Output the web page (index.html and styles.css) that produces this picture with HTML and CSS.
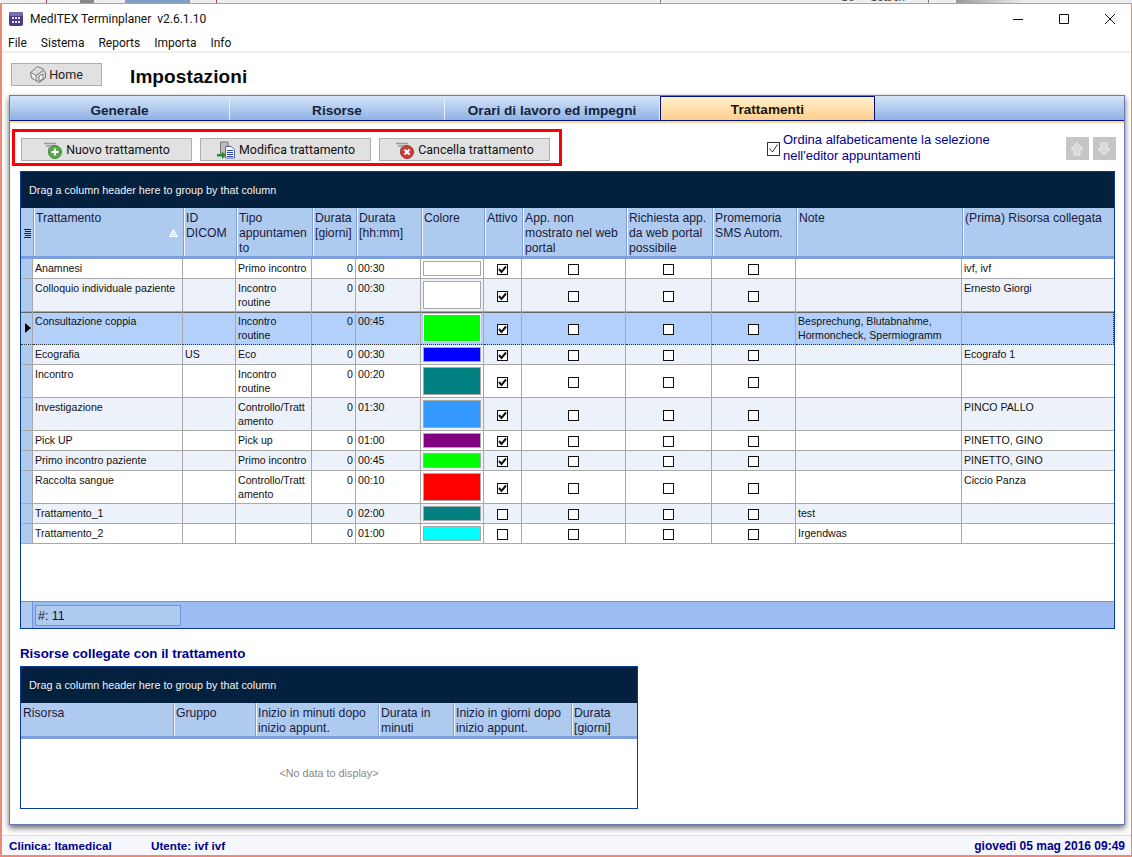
FILE: index.html
```html
<!DOCTYPE html>
<html lang="it">
<head>
  <meta charset="UTF-8">
  <title>MedITEX Terminplaner</title>
  <link rel="stylesheet" href="styles.css">
</head>
<body>

  <div class="behind">
    <span class="behind-line l1"></span>
    <span class="behind-dark d1"></span>
    <span class="behind-dark d2"></span>
    <span class="behind-line l2"></span>
    <span class="behind-tag t1">Go</span>
    <span class="behind-tag t2">Search</span>
    <span class="behind-fade"></span>
  </div>

  <div class="window">
    <div class="titlebar">
      <svg class="app-icon" width="16" height="16" viewBox="0 0 16 16">
        <rect x="1" y="1" width="14" height="14" rx="2" fill="#4b3a86"/>
        <rect x="1" y="1" width="14" height="4" rx="2" fill="#7a6cb0"/>
        <g fill="#e6e2f4">
          <rect x="4" y="6" width="2" height="2"/><rect x="7" y="6" width="2" height="2"/><rect x="10" y="6" width="2" height="2"/>
          <rect x="4" y="10" width="2" height="2"/><rect x="7" y="10" width="2" height="2"/><rect x="10" y="10" width="2" height="2"/>
        </g>
      </svg>
      <span class="app-title">MedITEX Terminplaner&nbsp; v2.6.1.10</span>
      <div class="win-btns">
        <svg width="10" height="10" viewBox="0 0 10 10"><path d="M0 5.5H10" stroke="#111" fill="none"/></svg>
        <svg width="10" height="10" viewBox="0 0 10 10"><path d="M.5.5H9.5V9.5H.5Z" stroke="#111" fill="none"/></svg>
        <svg width="10" height="10" viewBox="0 0 10 10"><path d="M0 0L10 10M10 0L0 10" stroke="#111" fill="none"/></svg>
      </div>
    </div>

    <div class="menubar">
      <span>File</span><span>Sistema</span><span>Reports</span><span>Importa</span><span>Info</span>
    </div>

    <div class="pagehead">
      <button class="home-btn">
        <svg width="16" height="17" viewBox="0 0 16 17">
          <path d="M.5 6.5L7.5.5L13 3L15.5 7V12L9 16.5L1.5 12Z" fill="#dcdcdc" stroke="#777"/>
          <path d="M1 6.5L6 9.5V15M6 9.5L13 4.5M9 10L13 8V13L9 15Z" fill="#fff" stroke="#777"/>
        </svg>
        Home
      </button>
      <h1>Impostazioni</h1>
    </div>

    <div class="panel">
      <div class="tabs">
        <div class="tab">Generale</div>
        <div class="tab">Risorse</div>
        <div class="tab">Orari di lavoro ed impegni</div>
        <div class="tab active">Trattamenti</div>
      </div>
      <div class="tab-line"></div>

      <div class="toolbar">
        <div class="actions">
          <button class="btn">
            <svg width="22" height="18" viewBox="0 0 22 18">
              <path d="M1 2.5H13M3 5H13M5 7.5H13" stroke="#999" stroke-width="1.5" fill="none"/>
              <circle cx="12" cy="11" r="6.5" fill="#5aa84f" stroke="#3d8a38"/>
              <path d="M12 7.5V14.5M8.5 11H15.5" stroke="#fff" stroke-width="2" fill="none"/>
            </svg>
            Nuovo trattamento
          </button>
          <button class="btn">
            <svg width="22" height="18" viewBox="0 0 22 18">
              <path d="M4.5 1H12V5H14V13H4.5Z" fill="#bdbdbd" stroke="#777"/>
              <path d="M9.5 5.5H15L18.5 8.5V17H9.5Z" fill="#fff" stroke="#5566bb"/>
              <path d="M11 9.5H17M11 11.5H17M11 13.5H17M11 15.5H17" stroke="#2e46c0" fill="none"/>
              <path d="M1 13H6V10.5L10 14.5L6 18V15.5H1Z" fill="#2e8b3a"/>
            </svg>
            Modifica trattamento
          </button>
          <button class="btn">
            <svg width="22" height="18" viewBox="0 0 22 18">
              <path d="M1 2.5H13M3 5H13M5 7.5H13" stroke="#999" stroke-width="1.5" fill="none"/>
              <circle cx="12" cy="11" r="6.5" fill="#c9403a" stroke="#a8322e"/>
              <path d="M9.5 8.5L14.5 13.5M14.5 8.5L9.5 13.5" stroke="#fff" stroke-width="2" fill="none"/>
            </svg>
            Cancella trattamento
          </button>
        </div>

        <label class="sort-opt">
          <span class="sort-box">
            <svg width="11" height="11" viewBox="0 0 11 11"><path d="M1.5 5.5L4.5 9L9.5 1.5" stroke="#333" fill="none"/></svg>
          </span>
          <span>Ordina alfabeticamente la selezione<br>nell'editor appuntamenti</span>
        </label>

        <div class="arrows">
          <span class="arrow">
            <svg width="16" height="16" viewBox="0 0 16 16"><path d="M8 2L14 8H11V14H5V8H2Z" fill="#d8d8d8" stroke="#eee"/></svg>
          </span>
          <span class="arrow">
            <svg width="16" height="16" viewBox="0 0 16 16"><path d="M5 2H11V8H14L8 14L2 8H5Z" fill="#d8d8d8" stroke="#eee"/></svg>
          </span>
        </div>
      </div>

      <div class="grid grid-main">
        <div class="group-panel">Drag a column header here to group by that column</div>
        <table class="tbl">
          <colgroup>
            <col><col><col><col><col><col><col><col><col><col><col><col><col>
          </colgroup>
          <thead>
            <tr>
              <th class="ind-head">
                <svg width="7" height="9" viewBox="0 0 7 9"><path d="M0 .5H7M1 2.5H7M0 4.5H7M1 6.5H7M0 8.5H7" stroke="#222" fill="none"/></svg>
              </th>
              <th>Trattamento<svg class="sort-mark" width="9" height="8" viewBox="0 0 9 8"><path d="M4.5.5L8.5 7.5H.5Z" fill="#dce8f8" stroke="#fff"/></svg></th>
              <th>ID DICOM</th>
              <th>Tipo appuntamen to</th>
              <th>Durata [giorni]</th>
              <th>Durata [hh:mm]</th>
              <th>Colore</th>
              <th>Attivo</th>
              <th>App. non mostrato nel web portal</th>
              <th>Richiesta app. da web portal possibile</th>
              <th>Promemoria SMS Autom.</th>
              <th>Note</th>
              <th>(Prima) Risorsa collegata</th>
            </tr>
          </thead>
          <tbody id="rows"></tbody>
        </table>
        <div class="grid-space"></div>
        <div class="grid-foot">
          <span class="foot-ind"></span>
          <span class="foot-count">#: 11</span>
        </div>
      </div>

      <h2 class="sub-title">Risorse collegate con il trattamento</h2>

      <div class="grid grid-sub">
        <div class="group-panel">Drag a column header here to group by that column</div>
        <table class="tbl">
          <colgroup>
            <col><col><col><col><col><col>
          </colgroup>
          <thead>
            <tr>
              <th>Risorsa</th>
              <th>Gruppo</th>
              <th>Inizio in minuti dopo inizio appunt.</th>
              <th>Durata in minuti</th>
              <th>Inizio in giorni dopo inizio appunt.</th>
              <th>Durata [giorni]</th>
            </tr>
          </thead>
        </table>
        <div class="no-data">&lt;No data to display&gt;</div>
      </div>
    </div>

    <div class="statusbar">
      <span class="st-clinic">Clinica: Itamedical</span>
      <span class="st-user">Utente: ivf ivf</span>
      <span class="st-date">giovedì 05 mag 2016 09:49</span>
    </div>
  </div>

  <script src="rows.js"></script>
</body>
</html>
```

FILE: styles.css
```css
* { box-sizing: border-box; }
html, body { margin: 0; padding: 0; height: 857px; overflow: hidden; background: #fff; }
body { font-family: "Liberation Sans", Arial, sans-serif; font-size: 12px; color: #111; }

/* what is left of the browser window behind the app */
.behind { height: 3px; background: #efefef; position: relative; overflow: hidden; }
.behind-line { position: absolute; top: 0; height: 3px; border-left: 1px solid #a04060; border-right: 1px solid #a04060; }
.behind-line.l1 { left: 46px; width: 171px; }
.behind-line.l2 { left: 660px; width: 269px; border-color: #8a7a80; }
.behind-dark { position: absolute; top: 0; height: 3px; background: #888; }
.behind-dark.d1 { left: 80px; width: 14px; }
.behind-dark.d2 { left: 125px; width: 65px; background: #7f9fc4; }
.behind-tag { position: absolute; top: -9px; font-size: 11px; color: #333; }
.behind-tag.t1 { left: 840px; }
.behind-tag.t2 { left: 870px; }
.behind-fade { position: absolute; left: 956px; right: 0; top: 0; height: 3px; background: linear-gradient(90deg, #999, #eee 40%); }

.window { height: 854px; border: 1px solid #f08878; border-width: 1px 1px 2px 2px; background: #fff; display: flex; flex-direction: column; }

.titlebar { height: 29px; display: flex; align-items: center; padding-left: 6px; flex: none; }
.app-icon { margin-right: 6px; }
.app-title { font-family: Roboto, sans-serif; font-size: 12px; color: #111; }
.win-btns { margin-left: auto; display: flex; gap: 36px; padding-right: 16px; }

.menubar { height: 20px; display: flex; gap: 14px; padding: 2px 0 0 6px; align-items: center; font-family: Roboto, sans-serif; font-size: 12px; border-bottom: 2px solid #f0f0f0; flex: none; }

.pagehead { height: 42px; display: flex; align-items: flex-start; padding: 10px 0 0 9px; flex: none; }
.home-btn { width: 91px; height: 23px; background: #e1e1e1; border: 1px solid #adadad; font-family: Roboto, sans-serif; font-size: 12.5px; color: #222; display: flex; align-items: center; justify-content: center; gap: 3px; padding: 0; }
.pagehead h1 { margin: 0 0 0 28px; font-size: 19px; letter-spacing: .1px; font-weight: bold; line-height: 28px; color: #0a0a0a; }

.panel { margin-left: 7px; width: 1116px; height: 730px; border: 1px solid #6a78b8; box-shadow: 0 3px 6px rgba(0,0,0,.6); background: #fff; flex: none; }

.tabs { height: 24px; display: flex; align-items: flex-end; background: linear-gradient(#d6e5f9, #8fb2e4); }
.tab { width: 215px; height: 22px; text-align: center; font-size: 13.6px; font-weight: bold; line-height: 25px; color: #15233c; border-right: 1px solid #e6eefa; }
.tab:first-child { width: 220px; }
.tab.active { border: 1px solid #00107a; border-bottom: none; background: linear-gradient(#fff0c8, #ffcf8e); color: #1a1408; height: 24px; line-height: 26px; }
.tab-line { height: 3px; border-top: 1px solid #00107a; background: #ffd9a0; }

.toolbar { display: flex; align-items: flex-start; padding: 6px 0 0 2px; height: 48px; }
.actions { width: 550px; height: 37px; border: 3px solid #f00; display: flex; gap: 8px; padding: 6px 0 0 6px; }
.btn { width: 171px; height: 23px; background: #e1e1e1; border: 1px solid #adadad; font-family: Roboto, sans-serif; font-size: 12.4px; color: #111; display: flex; align-items: center; justify-content: center; gap: 1px; padding: 0; }
.sort-opt { margin-left: 205px; margin-top: 3px; display: flex; align-items: center; gap: 3px; color: #00008c; font-size: 13px; line-height: 15.5px; }
.sort-box { width: 13px; height: 14px; margin-top: 2px; border: 1px solid #333; display: flex; align-items: center; justify-content: center; }
.arrows { margin-left: 76px; margin-top: 8px; display: flex; gap: 4px; }
.arrow { width: 23px; height: 23px; background: #c6c6c6; display: flex; align-items: center; justify-content: center; }

.grid { margin-left: 10px; border: 1px solid #0a3a9a; background: #fff; }
.grid-main { width: 1095px; height: 458px; display: flex; flex-direction: column; }
.grid-sub { width: 618px; height: 143px; }
.group-panel { height: 36px; background: #03213f; color: #f2f2f2; font-size: 10.8px; line-height: 37px; padding-left: 8px; flex: none; }

.tbl { width: 100%; table-layout: fixed; border-collapse: separate; border-spacing: 0; flex: none; }
.grid-main col:nth-child(1) { width: 12px; }
.grid-main col:nth-child(2) { width: 150px; }
.grid-main col:nth-child(3) { width: 53px; }
.grid-main col:nth-child(4) { width: 76px; }
.grid-main col:nth-child(5) { width: 44px; }
.grid-main col:nth-child(6) { width: 65px; }
.grid-main col:nth-child(7) { width: 63px; }
.grid-main col:nth-child(8) { width: 38px; }
.grid-main col:nth-child(9) { width: 104px; }
.grid-main col:nth-child(10) { width: 86px; }
.grid-main col:nth-child(11) { width: 84px; }
.grid-main col:nth-child(12) { width: 166px; }
.grid-sub col:nth-child(1) { width: 152px; }
.grid-sub col:nth-child(2) { width: 82px; }
.grid-sub col:nth-child(3) { width: 123px; }
.grid-sub col:nth-child(4) { width: 75px; }
.grid-sub col:nth-child(5) { width: 118px; }

.tbl th { background: #aecbef; height: 51px; padding: 3px 2px 0 2px; text-align: left; vertical-align: top; font-weight: normal; font-size: 12.2px; line-height: 15px; color: #1a1a3c; border-left: 1px solid #7d9fe0; box-shadow: inset 1px 0 0 #f4f8fe; border-bottom: 3px solid #7d9fe0; position: relative; overflow: hidden; }
.tbl th:first-child { border-left: none; box-shadow: none; }
.tbl th.ind-head { padding: 19px 0 0 3px; }
.sort-mark { position: absolute; right: 5px; top: 21px; }
.grid-sub .tbl th { height: 36px; }

.tbl td { height: 20px; padding: 2px 1px 0 2px; vertical-align: top; font-size: 10.6px; line-height: 14px; border-right: 1px solid #a8a8a8; border-bottom: 1px solid #a8a8a8; overflow: hidden; background: #fff; color: #111; }
.tbl tr.tall td { height: 33px; }
.tbl tr.alt td { background: #edf2fa; }
.tbl tr.sel td { background: #b3d0fb; border-bottom: 1px dotted #333; box-shadow: inset 0 1px 0 #666; }
.tbl tr.sel td:last-child { border-right: 1px dotted #333; }
.tbl td:last-child { border-right: none; }
.tbl td.ind { background: #aecbef !important; padding: 0; border-bottom-color: #a8a8a8; vertical-align: middle; box-shadow: none; }
.tbl td.num { text-align: right; padding-right: 2px; }
.tbl td.swatch-cell { padding: 2px; }
.tbl td.chk { padding: 0; vertical-align: middle; text-align: center; }
.tri { display: block; width: 0; height: 0; margin-left: 4px; border-left: 6px solid #000; border-top: 5px solid transparent; border-bottom: 5px solid transparent; }
.swatch { display: block; height: 100%; border: 1px solid #a8a8a8; }
.sel .swatch { border-color: #fff; }
.cb { display: inline-block; width: 11px; height: 11px; border: 1px solid #111; background: #fff; vertical-align: middle; line-height: 0; }
.cb svg { display: block; }

.grid-space { flex: 1; }
.grid-foot { height: 27px; background: #9dbcf2; border-top: 1px solid #6f94dc; display: flex; align-items: center; flex: none; }
.foot-ind { width: 12px; height: 100%; background: #aecbef; border-right: 1px solid #6f94dc; }
.foot-count { margin-left: 2px; width: 146px; height: 21px; background: #aecbef; border: 1px solid #6f94dc; font-size: 12.4px; line-height: 20px; padding-left: 2px; color: #111; }

.sub-title { margin: 17px 0 4px 10px; font-size: 13.3px; font-weight: bold; line-height: 16px; color: #00008c; }
.no-data { text-align: center; font-size: 10.8px; color: #888; padding-top: 28px; }

.statusbar { margin-top: auto; height: 20px; background: #f5f7fc; border-top: 1px solid #d8dce8; display: flex; align-items: center; padding: 0 6px 0 7px; font-weight: bold; font-size: 11.7px; color: #00008c; flex: none; }
.st-clinic { width: 142px; }
.st-date { margin-left: auto; font-size: 12px; }
```

FILE: rows.js
```js
const rows = [
  ['Anamnesi', '', 'Primo incontro', '00:30', '#ffffff', 1, '', 'ivf, ivf', ''],
  ['Colloquio individuale paziente', '', 'Incontro routine', '00:30', '#ffffff', 1, '', 'Ernesto Giorgi', 'tall alt'],
  ['Consultazione coppia', '', 'Incontro routine', '00:45', '#00ff00', 1, 'Besprechung, Blutabnahme, Hormoncheck, Spermiogramm', '', 'tall sel'],
  ['Ecografia', 'US', 'Eco', '00:30', '#0000ff', 1, '', 'Ecografo 1', 'alt'],
  ['Incontro', '', 'Incontro routine', '00:20', '#008080', 1, '', '', 'tall'],
  ['Investigazione', '', 'Controllo/Tratt amento', '01:30', '#3399ff', 1, '', 'PINCO PALLO', 'tall alt'],
  ['Pick UP', '', 'Pick up', '01:00', '#800080', 1, '', 'PINETTO, GINO', ''],
  ['Primo incontro paziente', '', 'Primo incontro', '00:45', '#00ff00', 1, '', 'PINETTO, GINO', 'alt'],
  ['Raccolta sangue', '', 'Controllo/Tratt amento', '00:10', '#ff0000', 1, '', 'Ciccio Panza', 'tall'],
  ['Trattamento_1', '', '', '02:00', '#008080', 0, 'test', '', 'alt'],
  ['Trattamento_2', '', '', '01:00', '#00ffff', 0, 'Irgendwas', '', '']
];

const tick = '<svg width="9" height="9" viewBox="0 0 9 9"><path d="M1 4L3.5 7L8 1.5" stroke="#111" stroke-width="2" fill="none"/></svg>';
const cb = on => `<td class="chk"><span class="cb">${on ? tick : ''}</span></td>`;

document.getElementById('rows').innerHTML = rows.map(r => `
  <tr class="${r[8]}">
    <td class="ind">${r[8].includes('sel') ? '<span class="tri"></span>' : ''}</td>
    <td>${r[0]}</td><td>${r[1]}</td><td>${r[2]}</td>
    <td class="num">0</td><td>${r[3]}</td>
    <td class="swatch-cell"><span class="swatch" style="background:${r[4]}"></span></td>
    ${cb(r[5])}${cb(0)}${cb(0)}${cb(0)}
    <td>${r[6]}</td><td>${r[7]}</td>
  </tr>`).join('');
```
